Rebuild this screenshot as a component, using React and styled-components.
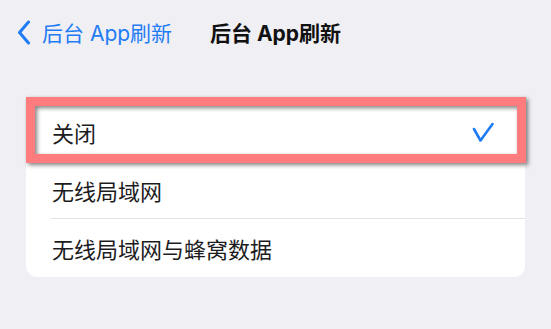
import React from "react";
import styled, { createGlobalStyle } from "styled-components";

const GlobalStyle = createGlobalStyle`
    body {
        margin: 0;
        background: #efeff4;
        font-family: "Noto Sans CJK SC", "Noto Sans", sans-serif;
    }
`
const Page = styled.div`
    height: 329px;
    background: #efeff4;
    overflow: hidden;
`
const NavBar = styled.div`
    height: 64px;
    display: grid;
    grid-template-columns: 1fr auto 1fr;
    align-items: center;
    font-family: Inter, "Noto Sans CJK SC", sans-serif;
    font-size: 21px;
`
const BackButton = styled.div`
    display: flex;
    align-items: center;
    gap: 11px;
    padding-left: 17px;
    color: #1f7cf4;
`
const Title = styled.div`
    font-weight: 700;
    color: #111;
`
const Card = styled.div`
    margin: 39px 26px 0;
    background: #fff;
    border-radius: 11px;
`
const Row = styled.div`
    position: relative;
    height: 58px;
    display: flex;
    align-items: center;
    justify-content: space-between;
    padding: 0 31px 0 26px;
    font-size: 22px;
    color: #1c1c1e;
    &::after {
        content: "";
        display: ${p => (p.$last ? "none" : "block")};
        position: absolute;
        left: 25px;
        right: 0;
        bottom: 0;
        height: 1px;
        background: #e3e3e6;
    }
`
const Highlight = styled.div`
    position: absolute;
    top: -6px;
    left: 0;
    right: -1px;
    bottom: -2px;
    border: 9px solid #fe7c7d;
    filter: drop-shadow(2px 2px 2px rgba(0, 0, 0, 0.5));
    z-index: 1;
`

function Chevron() {
    return (
        <svg width="14" height="25" viewBox="0 0 14 25">
            <path d="M11.5 2 L2.5 12.5 L11.5 23" fill="none" stroke="#1f7cf4" strokeWidth="3" strokeLinecap="round" strokeLinejoin="round" />
        </svg>
    )
}

function Check() {
    return (
        <svg width="22" height="21" viewBox="0 0 22 21">
            <path d="M2 7 L8.5 18.5 L20.5 2" fill="none" stroke="#1f7cf4" strokeWidth="2.6" strokeLinecap="round" strokeLinejoin="round" />
        </svg>
    )
}

const options = ["关闭", "无线局域网", "无线局域网与蜂窝数据"];

export default function App() {
    return (
        <Page>
            <GlobalStyle />
            <NavBar>
                <BackButton>
                    <Chevron />
                    <span>后台 App刷新</span>
                </BackButton>
                <Title>后台 App刷新</Title>
                <div />
            </NavBar>
            <Card>
                {options.map((label, i) => (
                    <Row key={label} $last={i === options.length - 1}>
                        <span>{label}</span>
                        {i === 0 && <Check />}
                        {i === 0 && <Highlight />}
                    </Row>
                ))}
            </Card>
        </Page>
    )
}
